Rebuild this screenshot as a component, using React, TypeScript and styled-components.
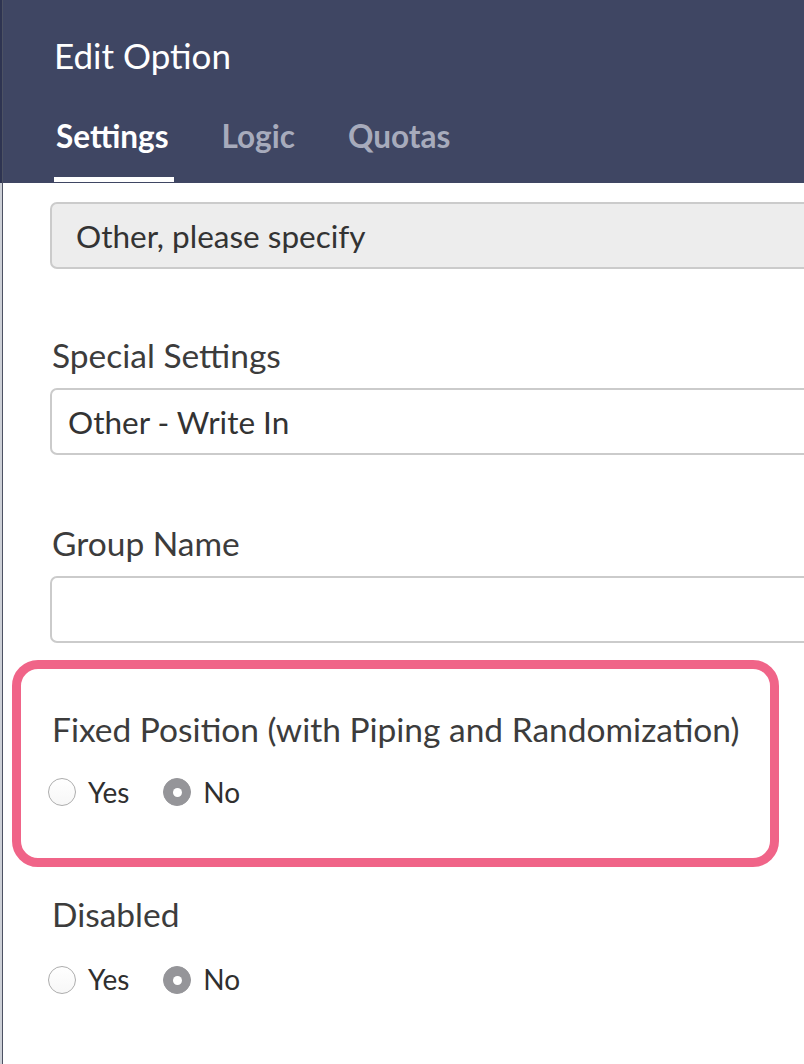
import { FC } from 'react';
import styled, { createGlobalStyle } from 'styled-components';

const GlobalStyle = createGlobalStyle`
  html, body {
    margin: 0;
    padding: 0;
    overflow: hidden;
    background: #ffffff;
  }
  body {
    font-family: Lato, "Open Sans", "Liberation Sans", sans-serif;
  }
`;

const Page = styled.div`
  display: flex;
  width: 804px;
  height: 1064px;
  overflow: hidden;
  background: linear-gradient(#2e3451 0 183px, #cdd0d7 183px);
`;

const Panel = styled.div`
  flex: 0 0 900px;
  margin-left: 2px;
  border-left: 1px solid #4d5263;
  background: #ffffff;
`;

const Header = styled.div`
  background: #3f4663;
  height: 183px;
  box-sizing: border-box;
  padding: 34px 0 0 51px;
  display: flex;
  flex-direction: column;
`;

const Title = styled.h1`
  margin: 0;
  font-size: 35px;
  font-weight: 400;
  line-height: 1.2;
  color: #ffffff;
`;

const Tabs = styled.div`
  display: flex;
  gap: 46px;
  margin-top: 42px;
`;

const Tab = styled.div<{ active?: boolean }>`
  font-size: 31.5px;
  font-weight: 700;
  line-height: 1.2;
  padding: 0 5px 21px 2px;
  color: ${({ active }) => (active ? '#ffffff' : '#a7abbc')};
  border-bottom: 5px solid ${({ active }) => (active ? '#ffffff' : 'transparent')};
`;

const Body = styled.div`
  padding: 19px 0 0 47px;
  display: flex;
  flex-direction: column;
`;

const Field = styled.div<{ readOnly?: boolean; indent: number }>`
  height: 63px;
  box-sizing: content-box;
  border: 2px solid #cbcbcb;
  border-radius: 7px;
  background: ${({ readOnly }) => (readOnly ? '#ededed' : '#ffffff')};
  padding-left: ${({ indent }) => indent}px;
  display: flex;
  align-items: center;
  font-size: 31.5px;
  color: #333333;
`;

const Label = styled.div<{ gap: number }>`
  font-size: 33.5px;
  line-height: 1.2;
  color: #3c3c3c;
  margin-top: ${({ gap }) => gap}px;
  margin-bottom: 13px;
  padding-left: 2px;
`;

const Highlight = styled.div`
  margin: 17px 0 0 -38px;
  width: 767px;
  box-sizing: border-box;
  border: 9px solid #f06488;
  border-radius: 26px;
  padding: 40px 0 49px 29px;
`;

const Section = styled.div<{ gap: number }>`
  margin-top: ${({ gap }) => gap}px;
`;

const SectionLabel = styled.div`
  font-size: 33.5px;
  line-height: 1.2;
  color: #3c3c3c;
  padding-left: 2px;
`;

const RadioRow = styled.div<{ gap: number }>`
  display: flex;
  align-items: center;
  gap: 34px;
  margin-top: ${({ gap }) => gap}px;
  margin-left: -2px;
`;

const RadioOption = styled.label`
  display: flex;
  align-items: center;
  gap: 12px;
  font-size: 28px;
  line-height: 1.2;
  color: #2f2f2f;
`;

const RadioDot = styled.span<{ checked?: boolean }>`
  width: 28px;
  height: 28px;
  border-radius: 50%;
  box-sizing: border-box;
  display: flex;
  align-items: center;
  justify-content: center;
  border: 1.5px solid ${({ checked }) => (checked ? '#959599' : '#adadad')};
  background: ${({ checked }) => (checked ? '#959599' : 'linear-gradient(#ffffff, #f7f7f7)')};
  &::after {
    content: '';
    width: 9px;
    height: 9px;
    border-radius: 50%;
    background: #ffffff;
    display: ${({ checked }) => (checked ? 'block' : 'none')};
  }
`;

const YesNo: FC<{ gap: number }> = ({ gap }) => (
  <RadioRow gap={gap}>
    <RadioOption>
      <RadioDot />
      Yes
    </RadioOption>
    <RadioOption>
      <RadioDot checked />
      No
    </RadioOption>
  </RadioRow>
);

const App: FC = () => {
  return (
    <>
      <GlobalStyle />
      <Page>
        <Panel>
          <Header>
            <Title>Edit Option</Title>
            <Tabs>
              <Tab active>Settings</Tab>
              <Tab>Logic</Tab>
              <Tab>Quotas</Tab>
            </Tabs>
          </Header>
          <Body>
            <Field readOnly indent={24}>Other, please specify</Field>
            <Label gap={66}>Special Settings</Label>
            <Field indent={16}>Other - Write In</Field>
            <Label gap={68}>Group Name</Label>
            <Field indent={16} />
            <Highlight>
              <SectionLabel>Fixed Position (with Piping and Randomization)</SectionLabel>
              <YesNo gap={26} />
            </Highlight>
            <Section gap={27}>
              <SectionLabel>Disabled</SectionLabel>
              <YesNo gap={29} />
            </Section>
          </Body>
        </Panel>
      </Page>
    </>
  );
};

export default App;
